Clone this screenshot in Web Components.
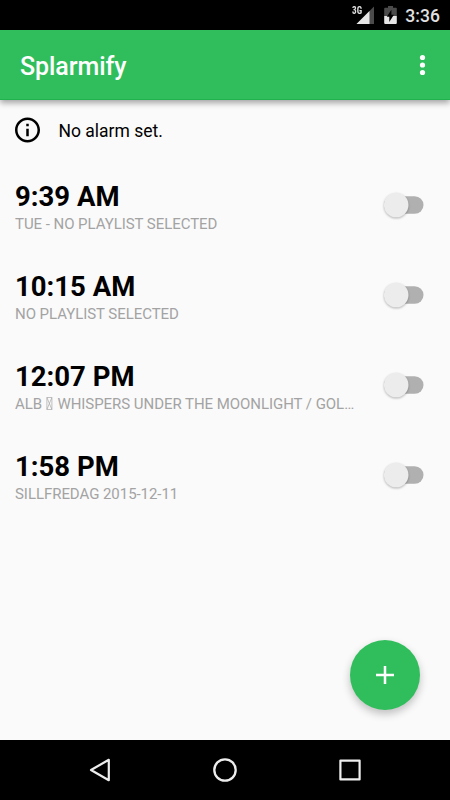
<!DOCTYPE html>
<html lang="en">
<head>
<meta charset="utf-8">
<title>Splarmify</title>
<style>
html,body{margin:0;height:100%;background:#fafafa}
body{font-family:Roboto,"Liberation Sans",sans-serif;overflow:hidden}
</style>
</head>
<body>
<alarm-app></alarm-app>
<script>
const define = (name, html) => customElements.define(name, class extends HTMLElement {
  constructor() {
    super();
    const t = document.createElement('template');
    t.innerHTML = html;
    this.attachShadow({mode: 'open'}).append(t.content.cloneNode(true));
  }
});

define('status-bar', `
<style>
:host{display:flex;height:30px;flex:none;background:#000;color:#e0e0e0;align-items:center;justify-content:flex-end;box-sizing:border-box;padding-right:10px}
svg{display:block;flex:none}
.net{font:700 10px/10px "Roboto Condensed",Roboto,sans-serif;width:11px;height:10px;margin-bottom:9px;white-space:nowrap}
.net span{display:inline-block;transform:scaleX(.92);transform-origin:0 0}
.signal{margin-left:-7px}
.battery{margin-left:10px}
.clock{font-size:17.5px;font-weight:500;line-height:20px;margin-left:8px;padding-top:2px;letter-spacing:.1px}
</style>
<div class="net"><span>3G</span></div>
<svg class="signal" width="18" height="30" viewBox="0 0 18 30"><path d="M18 6.5V24H.5z" fill="#4b4b4b"/><path d="M13.5 11V24H.5z" fill="#e6e6e6"/></svg>
<svg class="battery" width="13" height="30" viewBox="0 0 13 30"><path d="M1 7.7h3V6h5v1.7h3q.8 0 .8.8V16H.2V8.5q0-.8.8-.8z" fill="#4b4b4b"/><path d="M.2 16h12.6v7q0 1-1 1H1.2q-1 0-1-1z" fill="#e6e6e6"/><path d="M7.4 9.7v5h2.5L5.3 22v-5.2H2.8z" fill="#000"/></svg>
<div class="clock">3:36</div>`);

define('app-bar', `
<style>
:host{display:flex;height:70px;flex:none;box-sizing:border-box;align-items:center;justify-content:space-between;padding:2px 23px 0 20px;background:#2fbe5b;color:#fff;box-shadow:0 3px 6px rgba(0,0,0,.35),inset 0 -1px #1fb24d;position:relative}
h1{margin:0;font-size:25px;font-weight:500;line-height:30px;letter-spacing:-.08px;padding-top:1px}
svg{display:block;margin-top:-2px}
</style>
<h1><slot></slot></h1>
<svg width="10" height="24" viewBox="0 0 10 24" fill="#fff"><circle cx="5.5" cy="4.5" r="2.6"/><circle cx="5.5" cy="12" r="2.6"/><circle cx="5.5" cy="19.5" r="2.6"/></svg>`);

define('info-row', `
<style>
:host{display:flex;height:60px;flex:none;align-items:center;padding-left:12.5px;color:#000;font-size:17.5px;gap:16px}
svg{display:block;overflow:visible}
span{padding-top:2px}
</style>
<svg width="30" height="30" viewBox="0.4 0 24 24"><path d="M11 17h2v-6h-2v6zm1-15C6.48 2 2 6.48 2 12s4.48 10 10 10 10-4.48 10-10S17.52 2 12 2zm0 18c-4.41 0-8-3.59-8-8s3.59-8 8-8 8 3.59 8 8-3.59 8-8 8zM11 9h2V7h-2v2z"/></svg>
<span><slot></slot></span>`);

define('toggle-switch', `
<style>:host{display:block;width:50px;height:40px}svg{display:block;overflow:visible}.thumb{filter:drop-shadow(0 1px 1px rgba(0,0,0,.28))}</style>
<svg width="50" height="40" viewBox="0 0 50 40"><rect x="9" y="11.2" width="39.5" height="17.6" rx="8.8" fill="#b0b0b0"/><circle class="thumb" cx="21.2" cy="20" r="12.3" fill="#ececec"/></svg>`);

define('tofu-box', `
<style>:host{display:inline-block;width:7px;height:13px;vertical-align:-1px;margin-right:1px}svg{display:block}</style>
<svg width="7" height="13" viewBox="0 0 7 13" fill="none" stroke="#a6a6a6" stroke-width=".7"><path d="M.9.5h5v12h-5zM.9.5l5 12M5.9.5l-5 12"/></svg>`);

define('alarm-row', `
<style>
:host{display:flex;height:90px;flex:none;box-sizing:border-box;align-items:center;justify-content:space-between;padding:0 25px 0 15px}
.text{width:341px;padding-top:2px}
.time{font-size:27.5px;font-weight:700;line-height:35px;color:#000}
.note{font-size:15px;line-height:20px;color:#a3a3a3;white-space:nowrap;letter-spacing:-.05px}
</style>
<div class="text"><div class="time"><slot name="time"></slot></div><div class="note"><slot></slot></div></div>
<toggle-switch></toggle-switch>`);

define('add-button', `
<style>
:host{display:grid;place-items:center;width:70px;height:70px;border-radius:50%;background:#2fbe5b;box-shadow:0 4px 8px rgba(0,0,0,.24)}
svg{display:block}
</style>
<svg width="18" height="18" viewBox="0 0 18 18"><path d="M9 0v18M0 9h18" stroke="#fff" stroke-width="2.5"/></svg>`);

define('nav-bar', `
<style>
:host{display:flex;height:60px;flex:none;background:#000;justify-content:space-between;align-items:center;padding:0 85px}
svg{display:block}
</style>
<svg width="30" height="30" viewBox="0 0 30 30" fill="none" stroke="#ededed" stroke-width="2.2" stroke-linejoin="round"><path d="M6 15L23.8 4.8v20.4z"/></svg>
<svg width="30" height="30" viewBox="0 0 30 30" fill="none" stroke="#ededed" stroke-width="2.3"><circle cx="15" cy="15" r="10.7"/></svg>
<svg width="30" height="30" viewBox="0 0 30 30" fill="none" stroke="#ededed" stroke-width="2.2" stroke-linejoin="round"><rect x="5.4" y="5.6" width="19.2" height="18.8"/></svg>`);

define('alarm-app', `
<style>
:host{display:flex;flex-direction:column;width:450px;height:800px;background:#fafafa;position:relative}
main{flex:1;display:flex;flex-direction:column}
add-button{position:absolute;right:30px;bottom:90px}
</style>
<status-bar></status-bar>
<app-bar>Splarmify</app-bar>
<main>
<info-row>No alarm set.</info-row>
<alarm-row><span slot="time">9:39 AM</span>TUE - NO PLAYLIST SELECTED</alarm-row>
<alarm-row><span slot="time">10:15 AM</span>NO PLAYLIST SELECTED</alarm-row>
<alarm-row><span slot="time">12:07 PM</span>ALB <tofu-box></tofu-box> WHISPERS UNDER THE MOONLIGHT / GOL…</alarm-row>
<alarm-row><span slot="time">1:58 PM</span>SILLFREDAG 2015-12-11</alarm-row>
</main>
<add-button></add-button>
<nav-bar></nav-bar>`);
</script>
</body>
</html>
